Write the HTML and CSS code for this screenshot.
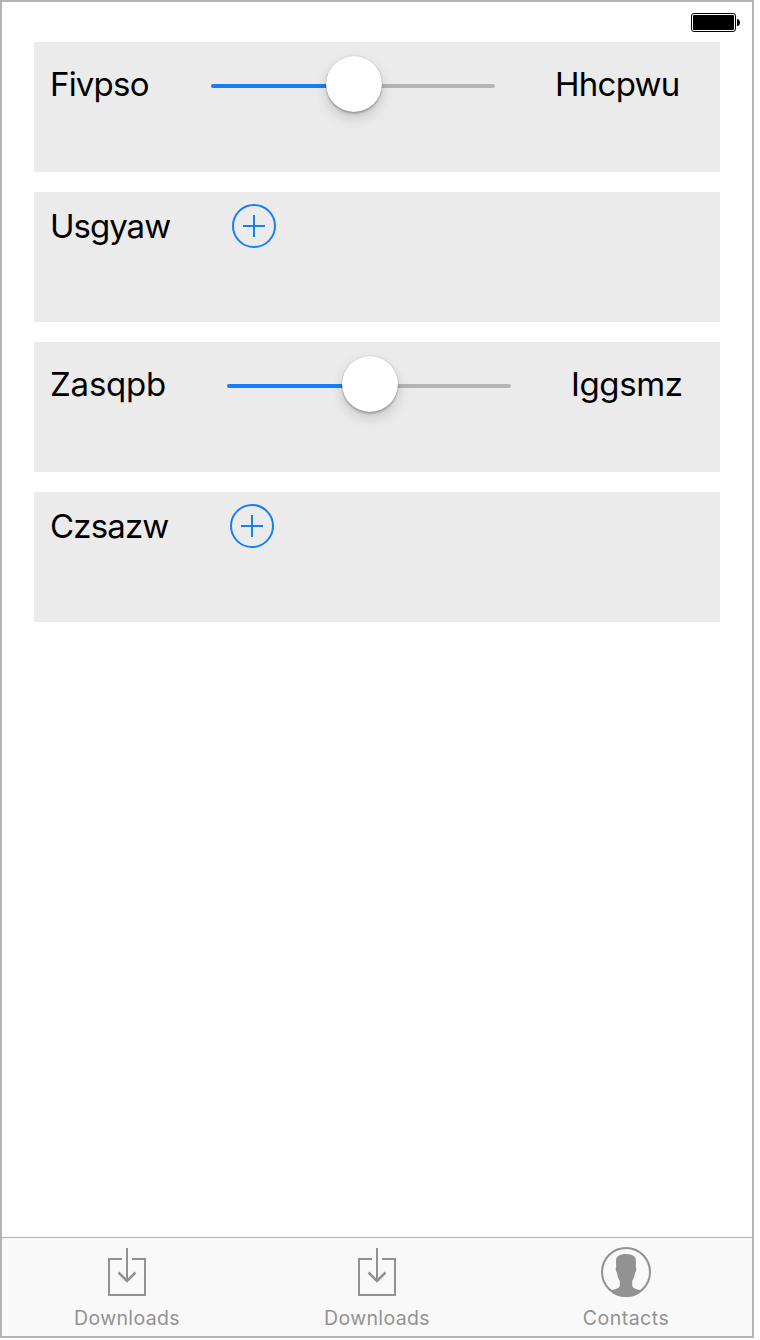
FILE: index.html
```html
<!DOCTYPE html>
<html lang="en">
<head>
<meta charset="utf-8">
<title>Settings</title>
<link rel="stylesheet" href="styles.css">
</head>
<body>
<div class="phone">
  <header class="status">
    <svg class="battery" width="50" height="20" viewBox="0 0 50 20">
      <rect x="0.5" y="0.5" width="44" height="18" rx="2.5" fill="#fff" stroke="#000"/>
      <rect x="2" y="2" width="41" height="15" rx="1"/>
      <path d="M46 6h1q2 1 2 3.500t-2 3.500h-1z"/>
    </svg>
  </header>
  <main class="cards">
    <section class="card">
      <span class="label fivpso">Fivpso</span>
      <div class="slider"><div class="thumb"></div></div>
      <span class="label hhcpwu">Hhcpwu</span>
    </section>
    <section class="card compact">
      <span class="label usgyaw">Usgyaw</span>
      <svg class="plus" width="44" height="44" viewBox="0 0 44 44"><circle cx="22" cy="22" r="21"/><path d="M11 22h22M22 11v22"/></svg>
    </section>
    <section class="card">
      <span class="label zasqpb">Zasqpb</span>
      <div class="slider"><div class="thumb"></div></div>
      <span class="label iggsmz">Iggsmz</span>
    </section>
    <section class="card compact">
      <span class="label czsazw">Czsazw</span>
      <svg class="plus" width="44" height="44" viewBox="0 0 44 44"><circle cx="22" cy="22" r="21"/><path d="M11 22h22M22 11v22"/></svg>
    </section>
  </main>
  <nav class="tabs">
    <div class="tab">
      <svg class="line-icon" width="52" height="52" viewBox="0 0 52 52"><path d="M21 13H8v36h36V13H31M26 2v33"/><path class="arrowhead" d="M17.500 26.500L26 35l8.500-8.500"/></svg>
      <span class="tab-label">Downloads</span>
    </div>
    <div class="tab">
      <svg class="line-icon" width="52" height="52" viewBox="0 0 52 52"><path d="M21 13H8v36h36V13H31M26 2v33"/><path class="arrowhead" d="M17.500 26.500L26 35l8.500-8.500"/></svg>
      <span class="tab-label">Downloads</span>
    </div>
    <div class="tab contacts">
      <svg width="52" height="52" viewBox="0 0 52 52">
        <circle cx="26" cy="26" r="24" fill="none" stroke="#929292" stroke-width="2"/>
        <path fill="#929292" d="M26 8c6 0 10 2 10 7l-.2 6.500c1 .5.600 3.500-.8 5.500-.5 3.500-1.500 6-2.800 8v4c0 3 3 4 9.800 5.500C38 49 32.500 51 26 51S14 49 10 44.500c6.800-1.500 9.800-2.500 9.800-5.500v-4c-1.300-2-2.300-4.500-2.800-8-1.400-2-1.800-5-.8-5.500L16 15c0-5 4-7 10-7z"/>
      </svg>
      <span class="tab-label">Contacts</span>
    </div>
  </nav>
</div>
</body>
</html>
```
FILE: styles.css
```css
body {
  margin: 0;
  background: #fff;
  font-family: Inter, "Liberation Sans", sans-serif;
  color: #000;
}
.phone {
  box-sizing: border-box;
  width: 754px;
  height: 1338px;
  border: 2px solid #b3b3b3;
  display: flex;
  flex-direction: column;
}
.status {
  display: flex;
  justify-content: flex-end;
  align-items: flex-start;
  box-sizing: border-box;
  height: 40px;
  padding: 11px 11px 0 0;
}
.battery { display: block; }
.cards {
  flex: 1;
  display: flex;
  flex-direction: column;
  gap: 20px;
  padding: 0 32px;
}
.card {
  box-sizing: border-box;
  height: 130px;
  padding: 12px 16px;
  background: #ebebeb;
  display: flex;
  align-items: flex-start;
}
.label {
  font-size: 33px;
  line-height: 61px;
  white-space: nowrap;
}
.compact .label { line-height: 45px; }
.fivpso { width: 161px; letter-spacing: -0.8px; }
.hhcpwu { letter-spacing: -0.75px; }
.usgyaw { width: 182px; letter-spacing: -1px; }
.zasqpb { width: 177px; letter-spacing: -0.2px; }
.iggsmz { letter-spacing: -0.4px; }
.czsazw { width: 180px; letter-spacing: -0.85px; }
.slider {
  width: 284px;
  height: 4px;
  margin: 30px 60px 0 0;
  border-radius: 2px;
  background: linear-gradient(90deg, #157efb 50%, #b4b4b4 50%);
  display: flex;
  align-items: center;
  justify-content: center;
}
.thumb {
  flex: none;
  width: 56px;
  height: 56px;
  margin: -4px 0 0 2px;
  border-radius: 50%;
  background: #fff;
  box-shadow: 0 0 1px rgba(0,0,0,.35), 0 2px 2px rgba(0,0,0,.22), 0 6px 13px rgba(0,0,0,.16);
}
.plus {
  fill: none;
  stroke: #157efb;
  stroke-width: 2;
}
.tabs {
  box-sizing: border-box;
  height: 99px;
  border-top: 1px solid #b0b0b0;
  background: #f9f9f9;
  display: grid;
  grid-template-columns: repeat(3, 1fr);
}
.tab {
  display: flex;
  flex-direction: column;
  align-items: center;
  padding-top: 8px;
  color: #929292;
}
.contacts { padding-right: 2px; }
.line-icon {
  fill: none;
  stroke: #929292;
  stroke-width: 2;
}
.arrowhead { stroke-width: 2.5; }
.tab-label {
  margin-top: 8px;
  font-size: 19.5px;
  line-height: 24px;
  letter-spacing: 0.35px;
}
.contacts .tab-label { letter-spacing: 0.5px; }
```
